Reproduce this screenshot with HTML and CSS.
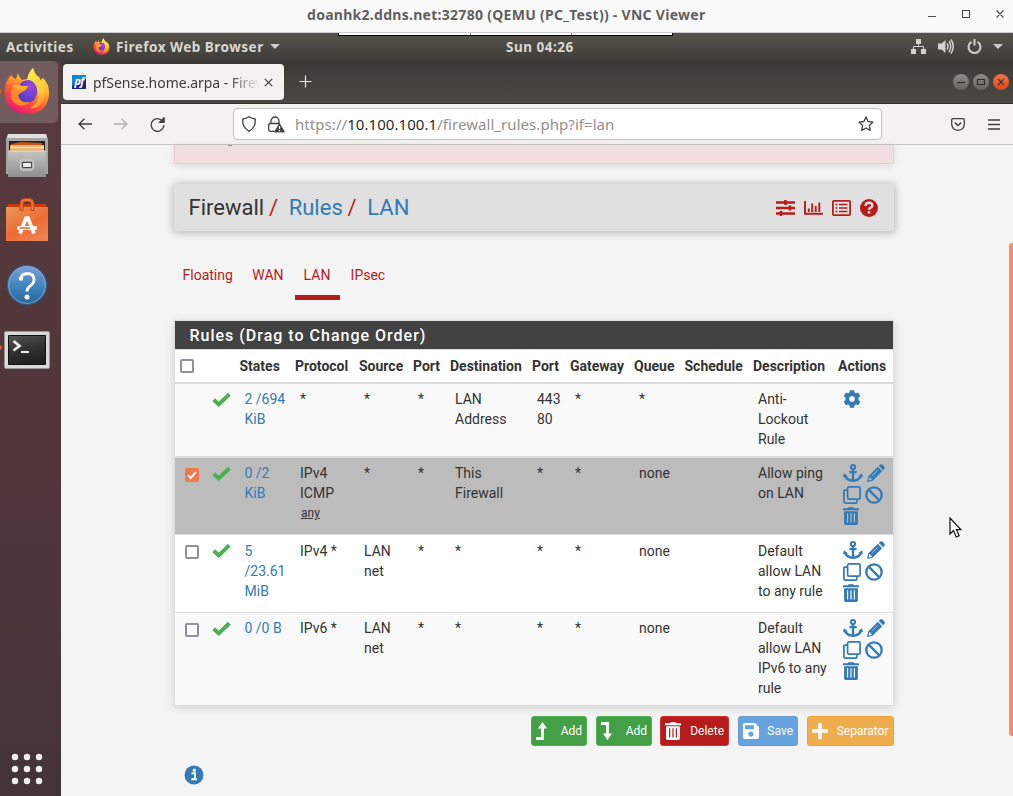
FILE: index.html
```html
<!DOCTYPE html>
<html lang="en">
<head>
<meta charset="utf-8">
<title>pfSense.home.arpa - Firewall: Rules: LAN</title>
<link rel="stylesheet" href="styles.css">
</head>
<body>
<svg class="defs" aria-hidden="true">
  <defs>
    <linearGradient id="fx-body" x1=".8" y1="0" x2=".25" y2="1"><stop offset="0" stop-color="#fff44f"/><stop offset=".35" stop-color="#ffb02e"/><stop offset=".65" stop-color="#ff5634"/><stop offset="1" stop-color="#e5107c"/></linearGradient>
    <linearGradient id="fx-flame" x1=".5" y1="0" x2=".7" y2="1"><stop offset="0" stop-color="#fff04a"/><stop offset=".6" stop-color="#ffc43a"/><stop offset="1" stop-color="#ff8a35"/></linearGradient>
    <radialGradient id="fx-globe" cx=".65" cy=".3" r=".8"><stop offset="0" stop-color="#a349d8"/><stop offset=".5" stop-color="#7040d8"/><stop offset="1" stop-color="#4a3bbd"/></radialGradient>
    <linearGradient id="steel" x1="0" y1="0" x2="0" y2="1"><stop offset="0" stop-color="#c4c4c4"/><stop offset="1" stop-color="#8e8e8e"/></linearGradient>
    <linearGradient id="bag" x1="0" y1="0" x2=".7" y2="1"><stop offset="0" stop-color="#e9985b"/><stop offset=".6" stop-color="#ee6c33"/><stop offset="1" stop-color="#ef8152"/></linearGradient>
    <linearGradient id="help" x1="0" y1="0" x2="0" y2="1"><stop offset="0" stop-color="#7e9fd9"/><stop offset=".55" stop-color="#3f82bb"/><stop offset="1" stop-color="#2b6592"/></linearGradient>
    <linearGradient id="term" x1="0" y1="0" x2=".3" y2="1"><stop offset="0" stop-color="#575757"/><stop offset=".5" stop-color="#343434"/><stop offset="1" stop-color="#222"/></linearGradient>
  </defs>
  <symbol id="i-firefox" viewBox="0 0 46 48">
    <path d="M7 8q2 3 5 4l2-6q1 4 4 7l5-1Q26 4 29 1q1 5 4 8 3 0 3 4l3-2q7 7 6 17-2 18-21 19Q4 47 1 29-1 17 7 8z" fill="url(#fx-body)"/>
    <path d="M23 13Q25 4 29 1q1 5 5 9l3 5 2-1q4 9 1 18-5 11-14 9 9-5 8-15-1-8-11-13z" fill="url(#fx-flame)"/>
    <path d="M14 20q3-7 11-7 8 2 8 12-1 10-10 11-9-1-9-9z" fill="url(#fx-globe)"/>
    <path d="M9 18q6-2 9 1h6q-1 5-6 6l-4 3q2 9 12 7-5 5-12 3Q6 35 7 25z" fill="#ff8b2c"/>
    <path d="M8 18q6-1 9 1h7q-2 4-8 5-5-3-8-6z" fill="#ffad32"/>
  </symbol>
  <symbol id="i-check" viewBox="0 0 18 14"><path d="M1.6 7.2 6.4 11.6 16.4 2" fill="none" stroke="currentColor" stroke-width="3.7"/></symbol>
  <symbol id="i-cog" viewBox="0 0 18 18"><path fill="currentColor" fill-rule="evenodd" d="M6.900.2h4.200l.5 2.400 1.300.7 2.300-.8 2.100 3.600-1.800 1.700v2.200l1.800 1.700-2.100 3.600-2.300-.8-1.300.8-.5 2.500H6.900l-.5-2.500-1.300-.8-2.300.8-2.100-3.600 1.800-1.700V7.800L.7 6.100l2.100-3.600 2.300.8 1.300-.7zM9 6.100A2.800 2.800 0 1 0 9 11.700 2.800 2.800 0 1 0 9 6.100z"/></symbol>
  <symbol id="i-anchor" viewBox="0 0 20 18"><g fill="none" stroke="currentColor"><circle cx="10" cy="3.100" r="2.100" stroke-width="2"/><path d="M10 5v11.500M6.400 8.200h7.200" stroke-width="2.300"/><path d="M2.200 12.200c1.200 2.800 4 4.200 7.800 4.500 3.800-.3 6.600-1.700 7.800-4.500" stroke-width="2.400"/></g><path d="M0 13.200.9 9.200 4.900 12.200zM20 13.200 19.100 9.200 15.100 12.200z" fill="currentColor"/></symbol>
  <symbol id="i-pencil" viewBox="0 0 18 18"><path fill="currentColor" fill-rule="evenodd" d="M0 18l1.200-5.600L10.800 2.800l4.400 4.400-9.600 9.600zM11.800 1.900l1.300-1.300q1.200-.9 2.400 0l1.900 1.900q.9 1.200 0 2.400l-1.300 1.300zM2.100 13.500l-.5 2.900 2.900-.5.200-1.200-1.300-.2-.1-1.300z"/><path d="m5.100 11.800 5.500-5.500" stroke="#b4d0e8" stroke-width=".8"/></symbol>
  <symbol id="i-clone" viewBox="0 0 18 18"><path d="M5.500.9h10.200q1.400 0 1.400 1.400v9.400q0 1.400-1.400 1.400H6q-1.400 0-1.400-1.400V2.300Q4.600.9 6 .9M4 4.200H1.900q-1 0-1 1v10.600q0 1.300 1.300 1.300h10.600q1 0 1-1v-2.300" fill="none" stroke="currentColor" stroke-width="1.700"/></symbol>
  <symbol id="i-ban" viewBox="0 0 18 18"><circle cx="9" cy="9" r="7.700" fill="none" stroke="currentColor" stroke-width="2.300"/><path d="m3.600 3.600 10.800 10.800" stroke="currentColor" stroke-width="2.300"/></symbol>
  <symbol id="i-trash" viewBox="0 0 16 18"><path fill="currentColor" fill-rule="evenodd" d="M0 1.300h4.600L5.700.2h4.600l1.100 1.100H16v2H0zM1.100 4.200h13.800v12.300q0 1.400-1.400 1.400h-11q-1.400 0-1.400-1.400zM4 6.300v9.200h1.200V6.300zm3.400 0v9.200h1.200V6.300zm3.400 0v9.200H12V6.300z"/></symbol>
</svg>

<header class="vnc-title">
  <span class="vnc-name">doanhk2.ddns.net:32780 (QEMU (PC_Test)) - VNC Viewer</span>
  <svg class="vnc-controls" viewBox="0 0 80 16" fill="none" stroke="#4a4a4a" stroke-width="1.100"><path d="M1 10.500h8M35.500 4.500h7v7h-7zM69.500 4.500l7 7m0-7-7 7"/></svg>
</header>

<div class="gnome-bar">
  <div class="gnome-left">
    <span class="activities">Activities</span>
    <svg class="mini-fox"><use href="#i-firefox"/></svg>
    <span class="app-name">Firefox Web Browser</span>
    <i class="caret"></i>
  </div>
  <span class="clock">Sun 04:26</span>
  <div class="gnome-right">
    <svg width="15" height="15" viewBox="0 0 15 15" fill="#d3d1cc"><path d="M5 0h5v5H5zM0 10h5v5H0zM10 10h5v5h-5z"/><path d="M7.500 5v2.500M2.500 10V7.500h10V10" fill="none" stroke="#d3d1cc"/></svg>
    <svg width="17" height="15" viewBox="0 0 17 15" fill="#d3d1cc"><path d="M0 4.500h3.500L7.500 1v13l-4-3.500H0z"/><path d="M9 4.500q2 3 0 6M11 2q3.600 5.500 0 11M13 .5q4.500 7 0 14" fill="none" stroke="#d3d1cc" stroke-width="1.500"/></svg>
    <svg width="15" height="15" viewBox="0 0 15 15" fill="none" stroke="#d3d1cc" stroke-width="2"><path d="M4.500 2.800a6 6 0 1 0 6 0M7.500 0v6.500"/></svg>
    <i class="caret"></i>
  </div>
  <div class="vnc-handle"><i></i><i></i><i></i></div>
</div>

<div class="desktop">
  <nav class="dock">
    <div class="dock-item active"><svg width="46" height="48"><use href="#i-firefox"/></svg></div>
    <div class="dock-item"><svg width="44" height="46" viewBox="0 0 44 46"><path d="M3 1h38l2 5v35H1V6z" fill="#a5a5a5"/><path d="M3 1h38l1 4H2z" fill="#e0e0e0"/><path d="M4 8h36v12H4z" fill="#29221e"/><path d="M6 11 16 9l21 1v9H6z" fill="#c6521c"/><path d="M5 12h34v7H5z" fill="#f3aa55"/><path d="M6 14.500h33" stroke="#fff0d0" stroke-width="1.300"/><path d="M3 18h38v26H3z" fill="url(#steel)"/><path d="M3 18h38" stroke="#ddd"/><rect x="15.500" y="27" width="13" height="10" rx="2" fill="#aaa" stroke="#d5d5d5"/><path d="M17.500 29.500h9v5h-9z" fill="#ededed" stroke="#444"/></svg></div>
    <div class="dock-item"><svg width="42" height="44" viewBox="0 0 42 44"><path d="M2 6h38l1 4H1z" fill="#c73b0b"/><path d="M0 9h42v34H0z" fill="url(#bag)"/><path d="M15.500 13V6q0-4 4-4h3q4 0 4 4v7" fill="none" stroke="#c6491b" stroke-width="4"/><path d="M15.500 12V6q0-4 4-4h3q4 0 4 4v6" fill="none" stroke="#ee7442" stroke-width="2"/><path d="M14 35.500 20 20h2l6 15.500" fill="none" stroke="#fff" stroke-width="3.600"/><path d="M13 30h16" stroke="#fff" stroke-width="4.200" stroke-linecap="round"/><path d="M13.500 30H24" stroke="#ee642c" stroke-width="1.500"/></svg></div>
    <div class="dock-item"><svg width="42" height="42" viewBox="0 0 42 42"><circle cx="21" cy="21" r="19.500" fill="url(#help)" stroke="#2b628f"/><circle cx="21" cy="21" r="18.300" fill="none" stroke="#83addf" stroke-width=".8"/><path d="M15 15q0-5 6-5.500 7 0 7 6 0 4-4 6.500-3 2.500-3 5.500" fill="none" stroke="#fff" stroke-width="2.800"/><circle cx="15" cy="14.500" r="2.200" fill="#fff"/><circle cx="21" cy="33" r="2.500" fill="#fff"/></svg></div>
    <div class="dock-item"><svg width="46" height="38" viewBox="0 0 46 38"><rect x=".5" y=".5" width="45" height="37" rx="1.500" fill="#d9d9d9" stroke="#999"/><path d="M4.500 4.500h37v29h-37z" fill="url(#term)" stroke="#111"/><path d="m9.500 10 6 5-6 4.500" fill="none" stroke="#eee" stroke-width="2.700"/><path d="M17 21h8" stroke="#eee" stroke-width="2"/></svg></div>
    <svg class="apps" width="32" height="32" viewBox="0 0 32 32" fill="#f1f0ef"><circle cx="4" cy="4" r="3.200"/><circle cx="16" cy="4" r="3.200"/><circle cx="28" cy="4" r="3.200"/><circle cx="4" cy="16" r="3.200"/><circle cx="16" cy="16" r="3.200"/><circle cx="28" cy="16" r="3.200"/><circle cx="4" cy="28" r="3.200"/><circle cx="16" cy="28" r="3.200"/><circle cx="28" cy="28" r="3.200"/></svg>
    <i class="run-dot first"></i><i class="run-dot last"></i>
  </nav>

  <main class="browser">
    <div class="tabstrip">
      <div class="tab">
        <span class="favicon">pf</span>
        <span class="tab-title">pfSense.home.arpa - Firew</span>
        <svg width="9" height="9" viewBox="0 0 9 9" stroke="#3c3c3a" stroke-width="1.200"><path d="m.8.8 7.400 7.400m0-7.400L.8 8.200"/></svg>
      </div>
      <svg class="new-tab" width="13" height="13" viewBox="0 0 13 13" stroke="#eee" stroke-width="1.200"><path d="M6.500.5v12M.5 6.500h12"/></svg>
      <div class="win-buttons">
        <span><svg viewBox="0 0 16 16"><path d="M4 8.500h8"/></svg></span><span><svg viewBox="0 0 16 16"><path d="M4.500 5.500h7v5h-7z"/></svg></span><span class="close"><svg viewBox="0 0 16 16"><path d="m5.200 5.200 5.600 5.600m0-5.600-5.600 5.600"/></svg></span>
      </div>
    </div>
    <div class="toolbar">
      <svg width="14" height="12" viewBox="0 0 14 12" class="nav-icon"><path d="M14 6H1m5.500-5.300L1 6l5.500 5.300"/></svg>
      <svg width="14" height="12" viewBox="0 0 14 12" class="nav-icon off"><path d="M0 6h13M7.500.7 13 6l-5.500 5.300"/></svg>
      <svg width="15" height="15" viewBox="0 0 15 15" class="nav-icon"><path d="M13.300 5.500A6.300 6.300 0 1 0 13.800 8M9.500 5.400h4.400V.7"/><path d="m9.700 5.200 4.200-4.200v4.200z" fill="#3f3f3d"/></svg>
      <div class="urlbar">
        <svg width="14" height="16" viewBox="0 0 14 16" class="nav-icon"><path d="M7 .7Q4 2.600.8 3q-.3 4 1 7Q3.500 13.500 7 15.300q3.500-1.800 5.200-5.300 1.300-3 1-7Q10 2.600 7 .7z"/></svg>
        <svg width="17" height="17" viewBox="0 0 17 17" class="nav-icon"><path d="M3 7.500V5a4 4 0 0 1 8 0v2.500M7 15.300H2.700q-2 0-2-2V9q0-1.500 1.500-1.500h9.300" /><path d="m11.500 7.500 5 8.500h-10z" fill="#3f3f3d" stroke="#3f3f3d" stroke-width=".8"/><path d="M11.500 10v3m0 1v1.200" stroke="#fff"/></svg>
        <span class="url">https://<b>10.100.100.1</b>/firewall_rules.php?if=lan</span>
        <svg width="16" height="16" viewBox="0 0 16 16" class="nav-icon star"><path d="m8 1 2.100 4.500 4.900.6-3.600 3.400.9 4.900L8 12l-4.300 2.400.9-4.900L1 6.100l4.900-.6z" stroke-linejoin="round"/></svg>
      </div>
      <svg width="14" height="13" viewBox="0 0 14 13" class="nav-icon pocket"><path d="M2 .7h10q1.300 0 1.300 1.300v4Q13 12 7 12.300 1 12 .7 6V2Q.7.700 2 .700z"/><path d="m3.800 4.500 3.200 3 3.200-3" stroke-width="1.500"/></svg>
      <svg width="12" height="11" viewBox="0 0 12 11" class="nav-icon burger"><path d="M0 1h12M0 5.500h12M0 10h12"/></svg>
    </div>

    <section class="page">
      <div class="alert"><i class="descender"></i></div>
      <div class="crumbs">
        <h1>Firewall<em>/</em><a>Rules</a><em>/</em><a>LAN</a></h1>
        <div class="crumb-icons">
          <svg width="19" height="16" viewBox="0 0 19 16"><path d="M0 2.500h19M0 8h19M0 13.500h19" stroke-width="2.300"/><path d="M9.500 0v5M14 5.500v5M5 11v5" stroke-width="2.600"/></svg>
          <svg width="19" height="14" viewBox="0 0 19 14"><path d="M1 0v12.800h18" stroke-width="1.900"/><path d="M4.800 7.500V11M8.200 2.500V11M11.700 5v6M15.300 1.500V11" stroke-width="1.900"/></svg>
          <svg width="19" height="16" viewBox="0 0 19 16"><rect x=".9" y=".9" width="17.200" height="14.200" rx="1" stroke-width="1.800"/><path d="M3.500 4.500h2m1.500 0h8.500M3.500 8h2M7 8h8.500m-12 3.500h2m1.500 0h8.500" stroke-width="1.700"/></svg>
          <svg width="18" height="18" viewBox="0 0 18 18"><circle cx="9" cy="9" r="9" fill="#b71c1c" stroke="none"/><path d="M5.600 7q0-3.200 3.500-3.200 3.200 0 3.200 2.600 0 1.500-1.700 2.300Q9 9.300 9 10.800" stroke="#e5dede" stroke-width="2.400"/><path d="M9 12.100v2.500" stroke="#e5dede" stroke-width="2.500"/></svg>
        </div>
      </div>
      <nav class="tabs"><a>Floating</a><a>WAN</a><a class="on">LAN</a><a>IPsec</a></nav>

      <div class="panel">
        <h2>Rules (Drag to Change Order)</h2>
        <table>
          <colgroup><col style="width:31px"><col style="width:28.500px"><col style="width:55.500px"><col style="width:64px"><col style="width:54px"><col style="width:37px"><col style="width:82px"><col style="width:38px"><col style="width:64px"><col style="width:50.500px"><col style="width:68.500px"><col style="width:85px"><col style="width:60px"></colgroup>
          <thead><tr><th><i class="box"></i></th><th></th><th>States</th><th>Protocol</th><th>Source</th><th>Port</th><th>Destination</th><th>Port</th><th>Gateway</th><th>Queue</th><th>Schedule</th><th>Description</th><th>Actions</th></tr></thead>
          <tbody>
            <tr class="r1"><td></td><td class="ok"><svg><use href="#i-check"/></svg></td><td><a>2 /694 KiB</a></td><td>*</td><td>*</td><td>*</td><td>LAN Address</td><td>443<br>80</td><td>*</td><td>*</td><td></td><td>Anti-<br>Lockout<br>Rule</td><td class="act"><div><svg class="cog"><use href="#i-cog"/></svg></div></td></tr>
            <tr class="r2"><td><i class="box checked"><svg viewBox="0 0 14 14"><path d="m3 7.200 2.800 2.800L11 4.200" fill="none" stroke="#fff" stroke-width="1.900"/></svg></i></td><td class="ok"><svg><use href="#i-check"/></svg></td><td><a>0 /2<br>KiB</a></td><td>IPv4<br>ICMP<br><u>any</u></td><td>*</td><td>*</td><td>This Firewall</td><td>*</td><td>*</td><td>none</td><td></td><td>Allow ping<br>on LAN</td><td class="act"><div><svg><use href="#i-anchor"/></svg><svg><use href="#i-pencil"/></svg><svg><use href="#i-clone"/></svg><svg><use href="#i-ban"/></svg><svg><use href="#i-trash"/></svg></div></td></tr>
            <tr class="r3"><td><i class="box"></i></td><td class="ok"><svg><use href="#i-check"/></svg></td><td><a>5<br>/23.61<br>MiB</a></td><td>IPv4 *</td><td>LAN<br>net</td><td>*</td><td>*</td><td>*</td><td>*</td><td>none</td><td></td><td>Default<br>allow LAN<br>to any rule</td><td class="act"><div><svg><use href="#i-anchor"/></svg><svg><use href="#i-pencil"/></svg><svg><use href="#i-clone"/></svg><svg><use href="#i-ban"/></svg><svg><use href="#i-trash"/></svg></div></td></tr>
            <tr class="r4"><td><i class="box"></i></td><td class="ok"><svg><use href="#i-check"/></svg></td><td><a>0 /0 B</a></td><td>IPv6 *</td><td>LAN<br>net</td><td>*</td><td>*</td><td>*</td><td>*</td><td>none</td><td></td><td>Default<br>allow LAN<br>IPv6 to any<br>rule</td><td class="act"><div><svg><use href="#i-anchor"/></svg><svg><use href="#i-pencil"/></svg><svg><use href="#i-clone"/></svg><svg><use href="#i-ban"/></svg><svg><use href="#i-trash"/></svg></div></td></tr>
          </tbody>
        </table>
      </div>

      <div class="buttons">
        <button class="add"><svg width="11" height="18" viewBox="0 0 11 18"><path d="M0 16.500h6.500V5" fill="none" stroke="#fff" stroke-width="2.800"/><path d="M2 6.500 6.500 0 11 6.500z" fill="#fff"/></svg>Add</button>
        <button class="add"><svg width="11" height="18" viewBox="0 0 11 18"><path d="M0 1.500h6.500V13" fill="none" stroke="#fff" stroke-width="2.800"/><path d="M2 11.500 6.500 18 11 11.500z" fill="#fff"/></svg>Add</button>
        <button class="delete"><svg width="16" height="18"><use href="#i-trash"/></svg>Delete</button>
        <button class="save"><svg width="16" height="16" viewBox="0 0 16 16"><path fill="#fff" fill-rule="evenodd" d="M2 0h10l4 4v10q0 2-2 2H2q-2 0-2-2V2q0-2 2-2zm0 2.200v4h9v-4zM8 8.500a2.600 2.600 0 1 0 0 5.200 2.600 2.600 0 1 0 0-5.200z"/></svg>Save</button>
        <button class="sep"><svg width="16" height="16" viewBox="0 0 16 16"><path d="M8 1v14M1 8h14" stroke="#fff" stroke-width="3.600" stroke-linecap="round"/></svg>Separator</button>
      </div>
      <svg class="info" width="20" height="20" viewBox="0 0 20 20"><circle cx="10" cy="10" r="9.500" fill="#337ab7"/><path d="M7.500 8.300H11v6M7.300 14.300h5.500" fill="none" stroke="#fff" stroke-width="1.900"/><circle cx="10.300" cy="5.200" r="1.600" fill="#fff"/></svg>
      <i class="scrollbar"></i>
    </section>
  </main>
</div>
<svg class="pointer" viewBox="0 0 13 21"><path d="M1 1v16l3.500-3.400L7.200 20l2.900-1.300-2.700-6h4.400z" fill="#fff" stroke="#111" stroke-width="1.200"/></svg>
</body>
</html>
```
FILE: styles.css
```css
* { box-sizing: border-box; }
body { margin: 0; width: 1013px; height: 796px; overflow: hidden; position: relative; font-family: "Noto Sans", sans-serif; display: flex; flex-direction: column; }
.defs { position: absolute; width: 0; height: 0; }
svg { display: block; flex: none; }

.vnc-title { height: 33px; flex: none; background: #fafafa; border-bottom: 1px solid #cdcdcb; display: flex; align-items: center; padding: 0 6px 2px 307px; }
.vnc-name { font: bold 14px/20px "Noto Sans", sans-serif; color: #5f5f5f; white-space: nowrap; letter-spacing: .28px; }
.vnc-controls { width: 80px; height: 16px; margin-left: auto; margin-top: -2px; }

.gnome-bar { position: relative; height: 28px; flex: none; background: linear-gradient(#56534a, #3e3d38); display: flex; align-items: center; color: #dad8d3; font: bold 13.500px/20px "Noto Sans", sans-serif; letter-spacing: .5px; white-space: nowrap; padding-bottom: 1px; }
.gnome-left { width: 506px; display: flex; align-items: center; padding-left: 6px; }
.activities { width: 87px; }
.mini-fox { width: 17px; height: 17px; margin-right: 6px; }
.caret { border: 5px solid transparent; border-top-color: #cfcdc8; border-bottom: 0; margin-left: 6px; }
.gnome-right { margin-left: auto; display: flex; align-items: center; gap: 12px; padding-right: 10px; }
.gnome-right .caret { margin-left: -1px; }
.vnc-handle { position: absolute; left: 338px; top: 0; width: 335px; height: 3px; background: #fff; border: 1px solid #000; border-top: 0; display: flex; }
.vnc-handle i { width: 101px; }
.vnc-handle i:first-child { width: 133px; }
.vnc-handle i:not(:last-child) { border-right: 1px solid #777; }

.desktop { flex: 1; display: flex; min-height: 0; }
.dock { position: relative; width: 61px; flex: none; background: linear-gradient(#573b3f, #513639 55%, #433439); display: flex; flex-direction: column; gap: 2.700px; }
.dock-item { width: 58px; height: 62px; display: flex; align-items: center; justify-content: center; padding: 0 4px 2px 0; }
.dock-item.active { background: #735c5e; border-radius: 0 5px 5px 0; }
.apps { margin: auto 0 11px 11px; }
.run-dot { position: absolute; left: -3px; width: 5px; height: 5px; border-radius: 50%; background: #e95420; }
.run-dot.first { top: 28px; }
.run-dot.last { top: 284px; }

.browser { flex: 1; display: flex; flex-direction: column; min-width: 0; }
.tabstrip { height: 43px; flex: none; background: linear-gradient(#3a3935, #4a4943); border-bottom: 1px solid #34332f; display: flex; align-items: center; padding: 0 4px 1px 2px; }
.tab { width: 221px; height: 36px; margin-top: 1px; border-radius: 4px; background: #f3f2f0; display: flex; align-items: center; padding: 0 11px 0 9px; }
.favicon { width: 14px; height: 14px; flex: none; background: linear-gradient(150deg, #1587d8 40%, #1c2183 60%); color: #fff; font: italic bold 11px/12px "Open Sans", sans-serif; letter-spacing: -.8px; text-align: center; }
.tab-title { width: 169px; flex: none; margin: 1px 0 0 7px; white-space: nowrap; font-size: 14px; line-height: 20px; color: #3a3a38; letter-spacing: -.05px; -webkit-mask-image: linear-gradient(90deg, #000 80%, transparent 99%); mask-image: linear-gradient(90deg, #000 80%, transparent 99%); }
.tab svg { margin-left: 2px; }
.new-tab { margin-left: 15px; }
.win-buttons { margin-left: auto; display: flex; gap: 4px; }
.win-buttons span { width: 16px; height: 16px; border-radius: 50%; background: linear-gradient(#8e8c85, #65635e); }
.win-buttons span.close { background: linear-gradient(#f27550, #dc4518); }
.win-buttons path { fill: none; stroke: #302e2b; stroke-width: 1.200; }

.toolbar { height: 41px; flex: none; background: #f3f2f0; border-bottom: 1px solid #c8c5c2; display: flex; align-items: center; padding: 0 13px 0 17px; }
.nav-icon { fill: none; stroke: #3f3f3d; stroke-width: 1.300; }
.nav-icon.off { stroke: #b3b1af; }
.toolbar > .nav-icon { margin-right: 22px; }
.toolbar > .nav-icon:nth-child(3) { margin-right: 68px; }
.urlbar { width: 649px; height: 32px; border: 1px solid #c4c1be; border-radius: 4px; background: #fff; display: flex; align-items: center; padding: 0 7px 0 8px; }
.urlbar .nav-icon + .nav-icon { margin-left: 12px; }
.url { margin-left: 10px; font-size: 15px; line-height: 20px; letter-spacing: .06px; color: #92908e; white-space: nowrap; }
.url b { color: #2b2b2a; font-weight: normal; }
.star { margin-left: auto; }
.toolbar > .pocket { margin: 0 23px 0 69px; }
.toolbar > .burger { margin: 0; }

.page { position: relative; flex: 1; min-height: 0; background: #f4f4f4; font-family: Roboto, sans-serif; font-size: 14px; line-height: 20px; color: #333; padding: 0 119px 0 113px; }
.alert { height: 19px; margin-bottom: 20px; background: #f2dede; border: 1px solid #ebccd1; border-top: 0; box-shadow: 0 2px 8px rgba(0,0,0,.1); }
.descender { display: block; width: 4px; height: 1px; margin-left: 53px; background: #6796c0; }
.crumbs { height: 47px; background: #e0e0e0; border-radius: 3px; box-shadow: 0 1px 7px 2px rgba(0,0,0,.2); display: flex; align-items: center; justify-content: space-between; padding: 0 16px 0 14.500px; }
.crumbs h1 { margin: 0; font-size: 22px; line-height: 30px; font-weight: 400; color: #333; }
.crumbs em { color: #c01e1e; font-style: normal; margin: 0 10.700px 0 4.800px; }
.crumbs a, td a { color: #337ab7; }
.crumb-icons { display: flex; align-items: center; gap: 9px; padding-top: 1px; }
.crumb-icons svg { fill: none; stroke: #b71c1c; }
.tabs { display: flex; padding-top: 28px; height: 89px; }
.tabs a { height: 41px; padding: 6px 10.500px 0 8.500px; color: #b71c1c; }
.tabs a:nth-child(2) { padding: 6px 11px 0 9px; }
.tabs a.on { border-bottom: 5px solid #b71c1c; width: 45px; margin: 0 2.500px 0 0; padding-left: 9px; white-space: nowrap; }

.panel { width: 720px; border: 1px solid #ddd; box-shadow: 0 2px 9px rgba(0,0,0,.15); background: #fff; }
.panel h2 { margin: 0; height: 29px; border-bottom: 1px solid #ddd; background: #424242; color: #fff; font: 500 16px/29px Roboto, sans-serif; letter-spacing: 1px; padding: 0 0 0 14.500px; }
table { table-layout: fixed; width: 718px; border-collapse: separate; border-spacing: 0; }
th { height: 34px; padding: 0 0 1px 5px; text-align: left; font-weight: 700; white-space: nowrap; border-bottom: 2px solid #ddd; line-height: 20px; }
td { padding: 5px 0 0 10px; vertical-align: top; }
.r1 { height: 74px; background: #f9f9f9; }
.r1 td { border-bottom: 2px solid #ddd; }
.r2 { height: 77px; background: #bcbcbc; }
.r3 { height: 78px; }
.r2 td, .r3 td { border-bottom: 1px solid #ddd; }
.r3 td { padding-top: 6px; }
.r4 { height: 92px; background: #f9f9f9; }
td u { font-size: 12px; margin-left: 1px; position: relative; top: -1px; }
td.ok { padding: 8px 0 0 6px; }
.r2 td.ok, .r3 td.ok { padding-top: 7.500px; }
.ok svg { width: 19px; height: 15px; color: #4caf50; }
.box { display: block; width: 14px; height: 14px; border: 2px solid #8f8f9d; border-radius: 2px; background: #fff; }
td .box { margin-top: 5px; }
.r3 .box { margin-top: 4px; }
.box.checked { border: 0; background: #f0784a; }
.act div { display: grid; grid-template-columns: 20px 18px; column-gap: 4px; row-gap: 3.500px; padding-top: 1px; color: #337ab7; }
.r3 .act div { padding-top: 0; }
.act svg { width: 18px; height: 18px; }
.act svg:nth-child(1) { width: 20px; }
.act svg:nth-child(4) { margin-left: -2.500px; }
.act svg:nth-child(5) { width: 16px; }
.act svg.cog { width: 18px; }

.buttons { display: flex; justify-content: flex-end; gap: 9px; margin-top: 10px; }
button { height: 30px; border: 1px solid; border-radius: 3px; color: #fff; font: 12px/18px Roboto, sans-serif; display: flex; align-items: center; padding: 0 4px 0 4px; white-space: nowrap; }
button svg { margin-right: auto; }
.add { width: 56px; background: #43a047; border-color: #4caf50; }
.delete { width: 69px; margin-left: -1px; background: #b71c1c; border-color: #d32f2f; }
.save { width: 60px; background: #67a3df; border-color: #6a9ccb; padding-left: 4px; }
.sep { width: 87px; background: #f0ad4e; border-color: #eea236; padding: 0 4.500px 0 4px; }
.info { margin: 19px 0 0 9.500px; }
.scrollbar { position: absolute; right: 0; top: 98px; width: 4px; height: 493px; background: #f4916b; border-radius: 3px 0 0 3px; }
.pointer { position: absolute; left: 949px; top: 517px; width: 13px; height: 21px; }
```
